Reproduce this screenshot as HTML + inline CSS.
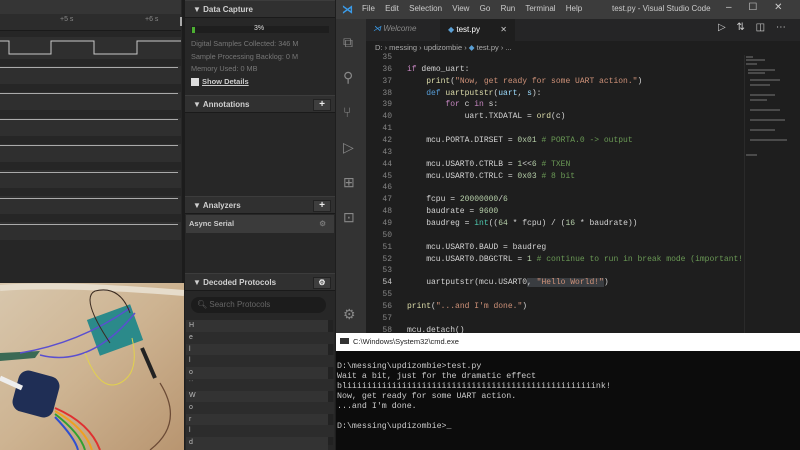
<!DOCTYPE html>
<html><head><meta charset="utf-8"><style>
*{margin:0;padding:0;box-sizing:border-box}
body{width:800px;height:450px;overflow:hidden;background:#1e1e1e;position:relative;font-family:"Liberation Sans",sans-serif}
.a{position:absolute}
.mono{font-family:"Liberation Mono",monospace}
.hdr{position:absolute;left:185px;width:150px;height:18px;background:#303030;border-top:1px solid #3c3c3c;border-bottom:1px solid #1a1a1a;color:#d0d0d0;font-size:8px;font-weight:bold;line-height:17px;padding-left:8px}
.btn{position:absolute;right:4px;top:3px;width:18px;height:12px;background:#3e3e3e;border:1px solid #222;color:#eee;font-size:10px;line-height:10px;text-align:center}
.code{position:absolute;left:366px;width:380px;font-size:8px;line-height:11.86px;white-space:pre;color:#d4d4d4}
.ln{color:#858585;display:inline-block;width:26px;text-align:right;margin-right:15px}
.k{color:#c586c0}.b{color:#569cd6}.s{color:#ce9178}.n{color:#b5cea8}.c{color:#6a9955}.f{color:#dcdcaa}.t{color:#4ec9b0}.v{color:#9cdcfe}
.row{position:absolute;left:186px;width:148px;height:11.7px;font-size:7px;color:#bbb;padding-left:3px;line-height:11.7px}
</style></head><body>
<!-- logic panel -->
<div class="a" style="left:0;top:0;width:183px;height:283px;background:#262626"></div>
<div class="a" style="left:0;top:0;width:181px;height:14px;background:#353535"></div>
<div class="a" style="left:0;top:14px;width:181px;height:17px;background:#2c2c2c;border-bottom:1px solid #1a1a1a"></div>
<div class="a" style="left:60px;top:16px;font-size:7px;color:#888">+5 s</div>
<div class="a" style="left:145px;top:16px;font-size:7px;color:#888">+6 s</div>
<div class="a" style="left:180px;top:17px;width:3px;height:9px;background:#aaa"></div>
<div class="a" style="left:182px;top:0;width:3px;height:283px;background:#1c1c1c"></div>
<svg class="a" style="left:0;top:30px" width="181" height="215">
<g fill="#2f2f2f"><rect y="7" width="181" height="22"/><rect y="36" width="181" height="18"/><rect y="62" width="181" height="18"/><rect y="88" width="181" height="18"/><rect y="114" width="181" height="18"/><rect y="140" width="181" height="18"/><rect y="166" width="181" height="18"/><rect y="192" width="181" height="18"/></g>
<polyline fill="none" stroke="#c8c8c8" stroke-width="1" points="0,11 9,11 9,24 51,24 51,11 94,11 94,24 137,24 137,11 181,11"/>
<g stroke="#aaa" stroke-width="1"><line x1="0" y1="37.5" x2="178" y2="37.5"/><line x1="0" y1="63.5" x2="178" y2="63.5"/><line x1="0" y1="89.5" x2="178" y2="89.5"/><line x1="0" y1="115.5" x2="178" y2="115.5"/><line x1="0" y1="142.5" x2="178" y2="142.5"/><line x1="0" y1="168.5" x2="178" y2="168.5"/><line x1="0" y1="194.5" x2="178" y2="194.5"/></g>
</svg>
<!-- right panel -->
<div class="a" style="left:185px;top:0;width:150px;height:450px;background:#272727"></div>
<div class="hdr" style="top:0">▼ Data Capture</div>
<div class="a" style="left:191px;top:26px;width:138px;height:7px;background:#1e1e1e"></div>
<div class="a" style="left:192px;top:27px;width:3px;height:6px;background:#4caf32"></div>
<div class="a" style="left:254px;top:25px;font-size:7px;color:#ddd">3%</div>
<div class="a" style="left:191px;top:38px;font-size:7.3px;color:#777;line-height:12.5px">Digital Samples Collected: 346 M<br>Sample Processing Backlog: 0 M<br>Memory Used: 0 MB</div>
<div class="a" style="left:191px;top:78px;width:8px;height:8px;background:#ddd"></div>
<div class="a" style="left:202px;top:77px;font-size:7.5px;color:#ccc;font-weight:bold;text-decoration:underline">Show Details</div>
<div class="hdr" style="top:95px">▼ Annotations<div class="btn">+</div></div>
<div class="hdr" style="top:196px">▼ Analyzers<div class="btn">+</div></div>
<div class="a" style="left:186px;top:215px;width:148px;height:18px;background:#3b3b3b;color:#ccc;font-size:7.5px;font-weight:bold;line-height:18px;padding-left:3px">Async Serial<span style="position:absolute;right:8px;color:#777">⚙</span></div>
<div class="hdr" style="top:273px">▼ Decoded Protocols<div class="btn" style="font-size:8px">⚙</div></div>
<div class="a" style="left:191px;top:297px;width:135px;height:16px;background:#1c1c1c;border-radius:8px;color:#666;font-size:8px;line-height:16px;padding-left:6px">🔍︎ Search Protocols</div>
<div class="a" style="left:186px;top:320px;width:142px;height:130px;background:#333"></div>
<div class="a" style="left:328px;top:320px;width:5px;height:125px;background:#222"></div>
<div class="row" style="top:320px">H</div><div class="row" style="top:332px;background:#2c2c2c">e</div><div class="row" style="top:344px">l</div><div class="row" style="top:355px;background:#2c2c2c">l</div><div class="row" style="top:367px">o</div><div class="row" style="top:379px;background:#2c2c2c">˙˙</div><div class="row" style="top:390px">W</div><div class="row" style="top:402px;background:#2c2c2c">o</div><div class="row" style="top:414px">r</div><div class="row" style="top:425px;background:#2c2c2c">l</div><div class="row" style="top:437px">d</div>
<!-- photo -->
<svg class="a" style="left:0;top:283px" width="184" height="167">
<defs><linearGradient id="w" x1="0" y1="0" x2="1" y2="1"><stop offset="0" stop-color="#d8c7ad"/><stop offset="0.5" stop-color="#cdb391"/><stop offset="1" stop-color="#b89570"/></linearGradient></defs>
<rect width="184" height="167" fill="url(#w)"/>
<path d="M0,5 Q60,0 184,10" stroke="#e6dccb" stroke-width="6" fill="none"/>
<path d="M0,70 L40,68 L35,75 L0,78Z" fill="#3b6a55"/>
<rect x="92" y="28" width="46" height="38" fill="#2b8a8a" transform="rotate(-20 115 47)"/>
<path d="M20,70 Q80,60 130,25 M40,72 Q90,85 135,30" stroke="#5a4fd0" stroke-width="1.5" fill="none"/>
<path d="M110,60 Q80,15 95,8 Q120,2 130,30" stroke="#3a2a20" stroke-width="1" fill="none"/>
<path d="M132,55 Q140,90 120,100 Q100,110 85,70" stroke="#e2d24c" stroke-width="1" fill="none"/>
<path d="M142,65 L155,95" stroke="#222" stroke-width="4"/>
<path d="M160,100 Q185,140 150,167" stroke="#6b4a35" stroke-width="1.2" fill="none"/>
<rect x="15" y="90" width="42" height="42" rx="10" fill="#1f2e55" transform="rotate(15 36 111)"/>
<path d="M55,125 Q90,140 100,167" stroke="#e03030" stroke-width="2" fill="none"/>
<path d="M55,128 Q85,145 92,167" stroke="#f0a020" stroke-width="2" fill="none"/>
<path d="M55,131 Q80,150 85,167" stroke="#30a030" stroke-width="2" fill="none"/>
<path d="M55,134 Q75,155 78,167" stroke="#3050d0" stroke-width="2" fill="none"/>
<path d="M0,95 L22,105" stroke="#eee" stroke-width="5"/>
</svg>
<!-- vscode -->
<div class="a" style="left:336px;top:0;width:464px;height:19px;background:#3c3c3c;font-size:8px;color:#ccc;line-height:19px"></div>
<div class="a" style="left:342px;top:3px;font-size:11px;color:#3b9be8;font-weight:bold">⋊</div>
<div class="a" style="left:362px;top:4px;font-size:8px;color:#ccc;word-spacing:8px">File Edit Selection View Go Run Terminal Help</div>
<div class="a" style="left:612px;top:4px;font-size:8px;color:#ccc">test.py - Visual Studio Code</div>
<div class="a" style="left:726px;top:2px;font-size:10px;color:#ccc;word-spacing:14px">–  ☐  ✕</div>
<div class="a" style="left:336px;top:19px;width:30px;height:314px;background:#333"></div>
<div class="a" style="left:343px;top:25px;font-size:14px;color:#888;line-height:35px">⧉<br>⚲<br>⑂<br>▷<br>⊞<br>⊡</div>
<div class="a" style="left:343px;top:306px;font-size:14px;color:#888">⚙</div>
<div class="a" style="left:366px;top:19px;width:434px;height:22px;background:#252526"></div>
<div class="a" style="left:373px;top:24px;font-size:8px;color:#888;font-style:italic"><span style="color:#3b9be8">⋊</span> Welcome</div>
<div class="a" style="left:440px;top:19px;width:75px;height:22px;background:#1e1e1e;color:#fff;font-size:8px;line-height:22px;padding-left:8px"><span style="color:#5a9fd4">◆</span> test.py<span style="position:absolute;right:8px;color:#ccc">✕</span></div>
<div class="a" style="left:718px;top:22px;font-size:10px;color:#ccc;word-spacing:8px">▷ ⇅ ◫ ⋯</div>
<div class="a" style="left:366px;top:41px;width:434px;height:14px;background:#1e1e1e;font-size:7.5px;color:#aaa;padding-left:9px;line-height:14px">D: › messing › updizombie › <span style="color:#5a9fd4">◆</span> test.py › ...</div>
<div class="a" style="left:744px;top:55px;width:46px;height:278px;background:#1e1e1e;border-left:1px solid #2a2a2a"></div>
<svg class="a" style="left:745px;top:55px" width="45" height="110"><g stroke="#777" stroke-width="1"><line x1="1" y1="2" x2="8" y2="2"/><line x1="1" y1="5" x2="20" y2="5"/><line x1="1" y1="9" x2="12" y2="9"/><line x1="3" y1="15" x2="30" y2="15"/><line x1="3" y1="18" x2="20" y2="18"/><line x1="5" y1="25" x2="35" y2="25"/><line x1="5" y1="30" x2="25" y2="30"/><line x1="5" y1="40" x2="30" y2="40"/><line x1="5" y1="45" x2="22" y2="45"/><line x1="5" y1="55" x2="35" y2="55"/><line x1="5" y1="65" x2="40" y2="65"/><line x1="5" y1="75" x2="30" y2="75"/><line x1="5" y1="85" x2="42" y2="85"/><line x1="1" y1="100" x2="12" y2="100"/></g></svg>
<div class="code mono" style="top:52px"><span class="ln">35</span>
<span class="ln">36</span><span class="k">if</span> demo_uart:
<span class="ln">37</span>    <span class="f">print</span>(<span class="s">"Now, get ready for some UART action."</span>)
<span class="ln">38</span>    <span class="b">def</span> <span class="f">uartputstr</span>(<span class="v">uart</span>, <span class="v">s</span>):
<span class="ln">39</span>        <span class="k">for</span> c <span class="k">in</span> s:
<span class="ln">40</span>            uart.TXDATAL = <span class="f">ord</span>(c)
<span class="ln">41</span>
<span class="ln">42</span>    mcu.PORTA.DIRSET = <span class="n">0x01</span> <span class="c"># PORTA.0 -> output</span>
<span class="ln">43</span>
<span class="ln">44</span>    mcu.USART0.CTRLB = <span class="n">1</span>&lt;&lt;<span class="n">6</span> <span class="c"># TXEN</span>
<span class="ln">45</span>    mcu.USART0.CTRLC = <span class="n">0x03</span> <span class="c"># 8 bit</span>
<span class="ln">46</span>
<span class="ln">47</span>    fcpu = <span class="n">20000000</span>/<span class="n">6</span>
<span class="ln">48</span>    baudrate = <span class="n">9600</span>
<span class="ln">49</span>    baudreg = <span class="t">int</span>((<span class="n">64</span> * fcpu) / (<span class="n">16</span> * baudrate))
<span class="ln">50</span>
<span class="ln">51</span>    mcu.USART0.BAUD = baudreg
<span class="ln">52</span>    mcu.USART0.DBGCTRL = <span class="n">1</span> <span class="c"># continue to run in break mode (important!</span>
<span class="ln">53</span>
<span class="ln" style="color:#c6c6c6">54</span>    uartputstr(mcu.USART0<span style="background:#3a3d41">, <span class="s">"Hello World!"</span></span>)
<span class="ln">55</span>
<span class="ln">56</span><span class="f">print</span>(<span class="s">"...and I'm done."</span>)
<span class="ln">57</span>
<span class="ln">58</span>mcu.detach()</div>
<!-- cmd -->
<div class="a" style="left:336px;top:333px;width:464px;height:117px;background:#0c0c0c"></div>
<div class="a" style="left:336px;top:333px;width:464px;height:18px;background:#fff;font-size:7.5px;color:#222;line-height:18px;padding-left:4px"><span style="display:inline-block;width:9px;height:6px;background:#333;margin-right:4px"></span>C:\Windows\System32\cmd.exe</div>
<div class="a mono" style="left:337px;top:362px;font-size:8.3px;line-height:10px;color:#ccc;white-space:pre">D:\messing\updizombie>test.py
Wait a bit, just for the dramatic effect
bliiiiiiiiiiiiiiiiiiiiiiiiiiiiiiiiiiiiiiiiiiiiiiiiiink!
Now, get ready for some UART action.
...and I'm done.

D:\messing\updizombie>_</div>
</body></html>
